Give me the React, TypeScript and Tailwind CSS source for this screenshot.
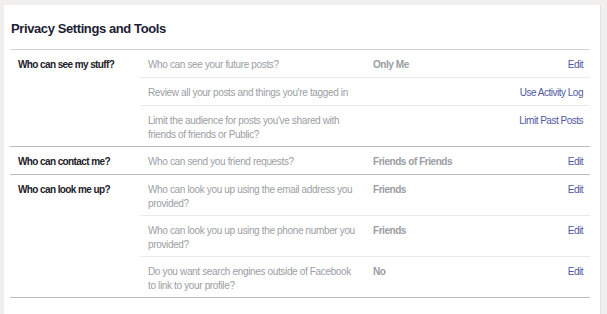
type Item = {
  question: string;
  value?: string;
  action: string;
  tall?: boolean;
};

type Section = {
  label: string;
  items: Item[];
};

const sections: Section[] = [
  {
    label: "Who can see my stuff?",
    items: [
      { question: "Who can see your future posts?", value: "Only Me", action: "Edit" },
      { question: "Review all your posts and things you're tagged in", action: "Use Activity Log" },
      {
        question: "Limit the audience for posts you've shared with friends of friends or Public?",
        action: "Limit Past Posts",
        tall: true,
      },
    ],
  },
  {
    label: "Who can contact me?",
    items: [{ question: "Who can send you friend requests?", value: "Friends of Friends", action: "Edit" }],
  },
  {
    label: "Who can look me up?",
    items: [
      {
        question: "Who can look you up using the email address you provided?",
        value: "Friends",
        action: "Edit",
        tall: true,
      },
      {
        question: "Who can look you up using the phone number you provided?",
        value: "Friends",
        action: "Edit",
        tall: true,
      },
      {
        question: "Do you want search engines outside of Facebook to link to your profile?",
        value: "No",
        action: "Edit",
        tall: true,
      },
    ],
  },
];

function SettingRow({ item, last }: { item: Item; last: boolean }) {
  return (
    <div
      className={`flex items-start pt-[8px] ${item.tall ? "pb-[4px]" : "pb-[5px]"} ${
        last ? "" : "border-b border-[#e9eaed]"
      }`}
    >
      <div className="w-[233px] shrink-0 pl-[8px] pr-[13px] text-[10px] leading-[14px] tracking-[-0.35px] text-[#9b9ea4]">
        {item.question}
      </div>
      <div className="flex-1 text-[10px] leading-[14px] font-bold tracking-[-0.45px] text-[#9a9da3]">
        {item.value}
      </div>
      <a className="pr-[7px] text-[10px] leading-[14px] tracking-[-0.5px] text-[#5157a5] cursor-pointer">
        {item.action}
      </a>
    </div>
  );
}

export default function App() {
  return (
    <div
      className="min-h-[314px] bg-[#f0efed] pt-[5px] pl-[4px] pr-[6px]"
      style={{ fontFamily: '"Liberation Sans", Arial, sans-serif' }}
    >
      <div className="min-h-[309px] bg-white border-r border-[#e2e2e2] pl-[6px] pr-[10px]">
        <div className="pt-[16px] pb-[12px] pl-[1px] border-b border-[#d3d4d6]">
          <h1 className="text-[13px] leading-[16px] font-bold tracking-[-0.4px] text-[#1c2035]">
            Privacy Settings and Tools
          </h1>
        </div>

        {sections.map((section) => (
          <div key={section.label} className="flex border-b border-[#bdbdbd]">
            <div className="w-[130px] shrink-0 pl-[8px] pt-[8px] text-[10px] leading-[14px] font-bold tracking-[-0.6px] text-[#1d2129]">
              {section.label}
            </div>
            <div className="flex-1">
              {section.items.map((item, i) => (
                <SettingRow key={item.question} item={item} last={i === section.items.length - 1} />
              ))}
            </div>
          </div>
        ))}
      </div>
    </div>
  );
}
